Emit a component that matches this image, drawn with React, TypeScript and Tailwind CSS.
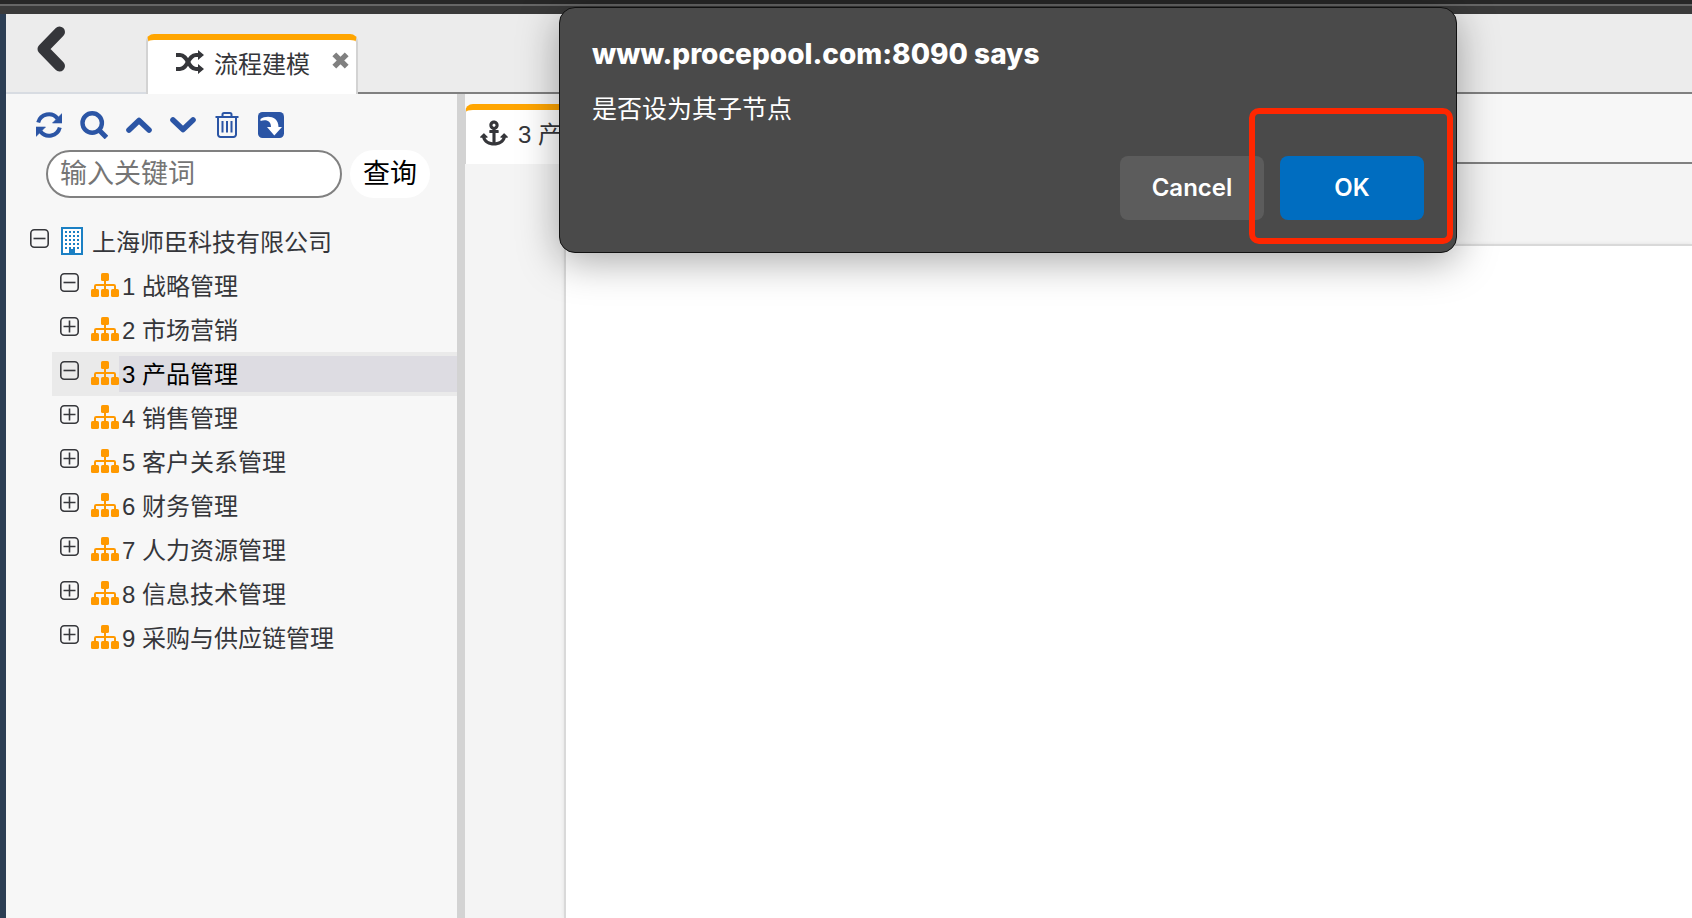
import { FaAnchor } from 'react-icons/fa';

const tree = [
  { label: '1 战略管理', open: true },
  { label: '2 市场营销', open: false },
  { label: '3 产品管理', open: true, selected: true },
  { label: '4 销售管理', open: false },
  { label: '5 客户关系管理', open: false },
  { label: '6 财务管理', open: false },
  { label: '7 人力资源管理', open: false },
  { label: '8 信息技术管理', open: false },
  { label: '9 采购与供应链管理', open: false },
];

function BackIcon() {
  return (
    <svg className="w-[30px] h-[46px]" viewBox="0 0 30 46" fill="none" stroke="#35363a" strokeWidth="11" strokeLinecap="round" strokeLinejoin="round">
      <path d="M23.500 6L7 23L23.500 40" />
    </svg>
  );
}

function ShuffleIcon() {
  return (
    <svg className="w-7 h-6" viewBox="0 0 28 24" fill="none" stroke="currentColor" strokeWidth="4">
      <path d="M0 5H4C12 5 12 19 20 19H23" />
      <path d="M0 19H4C12 19 12 5 20 5H23" />
      <path d="M22 0L28 5L22 10ZM22 14L28 19L22 24Z" fill="currentColor" stroke="none" />
    </svg>
  );
}

function RefreshIcon() {
  return (
    <svg className="w-[26px] h-[26px]" viewBox="0 0 26 26" fill="none" stroke="currentColor" strokeWidth="4">
      <path d="M2.200 10.500A11 11 0 0 1 21.500 6.500" />
      <path d="M23.800 15.500A11 11 0 0 1 4.500 19.500" />
      <path d="M26 1.500V11H16.500ZM0 24.500V15H9.500Z" fill="currentColor" stroke="currentColor" strokeWidth="0.600" strokeLinejoin="round" />
    </svg>
  );
}

function SearchIcon() {
  return (
    <svg className="w-7 h-7" viewBox="0 0 28 28" fill="none" stroke="currentColor">
      <circle cx="12.200" cy="12" r="9.700" strokeWidth="4.400" />
      <path d="M18.500 18.500L26.500 26.500" strokeWidth="5" />
    </svg>
  );
}

function ArrowIcon({ down }: { down?: boolean }) {
  return (
    <svg className="w-[26px] h-[18px]" viewBox="0 0 26 18" fill="none" stroke="currentColor" strokeWidth="5.600" strokeLinecap="round" strokeLinejoin="round">
      <path d={down ? 'M3 4L13 13.500L23 4' : 'M3 14L13 4.500L23 14'} />
    </svg>
  );
}

function TrashIcon() {
  return (
    <svg className="w-6 h-7" viewBox="0 0 24 28" fill="none" stroke="currentColor" strokeWidth="2">
      <path d="M0.500 6h23" />
      <path d="M7.500 6V3.500a1.500 1.500 0 0 1 1.500-1.500h6a1.500 1.500 0 0 1 1.500 1.500V6" />
      <path d="M3 6v17.500a2.500 2.500 0 0 0 2.500 2.500h13a2.500 2.500 0 0 0 2.500-2.500V6" />
      <path d="M7.500 10v11.500M12 10v11.500M16.500 10v11.500" />
    </svg>
  );
}

function ExportIcon() {
  return (
    <svg className="w-[26px] h-[26px]" viewBox="0 0 26 26">
      <rect width="26" height="26" rx="4.500" fill="currentColor" />
      <path
        d="M2.500 7C8 3 20.500 3.500 20.500 15H24L16.300 23.500L9 15H13C13 9.500 9 7 2.500 9Z"
        fill="white"
      />
    </svg>
  );
}

function CloseIcon() {
  return (
    <svg className="w-[17px] h-[17px]" viewBox="0 0 17 17" stroke="currentColor" strokeWidth="5.400" strokeLinejoin="round">
      <path d="M2.300 2.300L14.700 14.700M14.700 2.300L2.300 14.700" />
    </svg>
  );
}

function BuildingIcon() {
  const rows = [4, 8, 12, 16, 20];
  const cols = [4, 8, 12, 16];
  return (
    <svg className="w-[22px] h-7" viewBox="0 0 22 28">
      <rect x="1" y="1" width="20" height="26" fill="white" stroke="#1b80c4" strokeWidth="2" />
      {rows.map((y) => cols.map((x) => <rect key={`${x}-${y}`} x={x} y={y} width="2" height="2" fill="#1b80c4" />))}
      <path d="M8 22h6v5h-6z" fill="#1b80c4" />
    </svg>
  );
}

function SitemapIcon() {
  return (
    <svg className="w-7 h-6" viewBox="0 0 28 24" fill="#ff9900">
      <rect x="10" width="8" height="8" rx="1.600" />
      <rect y="16" width="8" height="8" rx="1.600" />
      <rect x="10" y="16" width="8" height="8" rx="1.600" />
      <rect x="20" y="16" width="8" height="8" rx="1.600" />
      <path d="M14 7V17M4 17V13.200Q4 12 5.200 12H22.800Q24 12 24 13.200V17" fill="none" stroke="#ff9900" strokeWidth="2" />
    </svg>
  );
}

function Toggle({ open }: { open: boolean }) {
  return (
    <button className="mt-[9px] self-start shrink-0" aria-label={open ? '收起' : '展开'}>
      <svg className="w-[19px] h-[19px]" viewBox="0 0 19 19" fill="none" stroke="#37383c" strokeWidth="1.600">
        <rect x="0.800" y="0.800" width="17.400" height="17.400" rx="3.500" />
        <path d={open ? 'M3.500 9.500h12' : 'M3.500 9.500h12M9.500 3.500v12'} />
      </svg>
    </button>
  );
}

function Sidebar() {
  return (
    <aside className="w-[451px] shrink-0 bg-[#f7f7f7]">
      <div className="flex items-center pt-4 pl-[30px] h-[46px] gap-[18px] text-[#2b55a5]">
        <button aria-label="刷新"><RefreshIcon /></button>
        <button aria-label="搜索"><SearchIcon /></button>
        <button aria-label="上移"><ArrowIcon /></button>
        <button aria-label="下移"><ArrowIcon down /></button>
        <button className="px-px" aria-label="删除"><TrashIcon /></button>
        <button aria-label="导出"><ExportIcon /></button>
      </div>

      <div className="flex gap-2 mt-[10px] pl-10">
        <input
          type="text"
          aria-label="关键词"
          placeholder="输入关键词"
          className="w-[296px] h-12 px-3 pt-px rounded-full border-2 border-[#808080] bg-white text-[27px] placeholder:text-[#757575] outline-none"
        />
        <button className="w-20 h-12 pt-px rounded-full bg-white text-[27px] text-black">查询</button>
      </div>

      <div className="mt-[22px] text-2xl leading-[46px] text-[#35363a]">
        <div className="flex h-11 pl-6">
          <Toggle open />
          <div className="ml-3 mt-[7px]"><BuildingIcon /></div>
          <span className="ml-[9px]">上海师臣科技有限公司</span>
        </div>
        <ul className="pl-[46px]">
          {tree.map((node) => (
            <li key={node.label} className={node.selected ? 'flex h-11 pl-2 bg-[#eaeaea] text-black' : 'flex h-11 pl-2'}>
              <Toggle open={node.open} />
              <div className="ml-3 mt-[9px]"><SitemapIcon /></div>
              <span className={node.selected ? 'flex-1 my-1 pl-[3px] leading-[38px] bg-[#dddce2]' : 'flex-1 my-1 pl-[3px] leading-[38px]'}>
                {node.label}
              </span>
            </li>
          ))}
        </ul>
      </div>
    </aside>
  );
}

function Dialog() {
  return (
    <div
      role="dialog"
      aria-label="www.procepool.com:8090 says"
      className="absolute left-[559px] top-[7px] w-[898px] px-8 pt-[26px] pb-8 rounded-2xl border border-[#111111] bg-[#4a4a4a] text-white shadow-[0_8px_40px_rgba(0,0,0,0.35)]"
    >
      <h1 className="font-['Inter','Noto_Sans_CJK_SC',sans-serif] text-[28px] leading-10 font-extrabold">www.procepool.com:8090 says</h1>
      <p className="mt-[17px] text-[25px] leading-9">是否设为其子节点</p>
      <div className="flex justify-end gap-4 mt-[29px] font-['Inter','Noto_Sans_CJK_SC',sans-serif] text-2xl font-semibold">
        <button className="w-36 h-16 rounded-lg bg-[#5c5c5c]">Cancel</button>
        <button className="w-36 h-16 rounded-lg bg-[#006dc0]">OK</button>
      </div>
      <div className="absolute right-[3px] bottom-2 w-[204px] h-[136px] rounded-[10px] border-6 border-[#ff2600] pointer-events-none"></div>
    </div>
  );
}

export default function App() {
  return (
    <div className="relative flex flex-col min-h-screen overflow-hidden bg-[#f4f4f4] font-['Liberation_Sans','Noto_Sans_CJK_SC',sans-serif]">
      <div className="h-[14px] border-t-4 border-[#272727] bg-[#3a3a3a]">
        <div className="h-[2px] bg-[#666666]"></div>
      </div>

      <div className="flex flex-1 flex-col border-l-6 border-[#2c3e54]">
        <header className="flex h-20 bg-[#ececec]">
          <div className="w-[140px] pl-[30px] pt-3 border-b-2 border-[#d8dce2]">
            <button aria-label="返回"><BackIcon /></button>
          </div>
          <div className="w-[212px] mt-5 flex border-x-2 border-[#d3d3d3] border-t-6 border-t-[#ffa500] rounded-t-lg bg-white text-[#35363a]">
            <div className="ml-7 mt-[10px]"><ShuffleIcon /></div>
            <span className="ml-[10px] mt-[5px] text-2xl leading-10">流程建模</span>
            <button aria-label="关闭" className="ml-[22px] mt-3 self-start text-[#808080]"><CloseIcon /></button>
          </div>
          <div className="flex-1 border-b-2 border-[#808080]"></div>
        </header>

        <div className="flex flex-1">
          <Sidebar />
          <div className="w-2 shrink-0 bg-[#d3d3d3]"></div>
          <main className="flex flex-1 flex-col">
            <div className="flex h-[70px] bg-[#f7f7f7]">
              <div className="w-[212px] mt-[10px] flex border-l border-[#d3d3d3] border-t-6 border-t-[#ffa500] rounded-t-lg bg-white text-[#35363a]">
                <FaAnchor className="ml-[14px] mt-[9px] w-7 h-7 shrink-0" />
                <span className="ml-[10px] mt-[5px] text-2xl leading-10">3 产品管理</span>
              </div>
              <div className="flex-1 border-b-2 border-[#808080]"></div>
            </div>
            <div className="flex-1 mt-20 ml-[99px] border-l-2 border-t-2 border-[#d9d9d9] bg-white shadow-[0_0_4px_rgba(0,0,0,0.08)]"></div>
          </main>
        </div>
      </div>

      <Dialog />
    </div>
  );
}
